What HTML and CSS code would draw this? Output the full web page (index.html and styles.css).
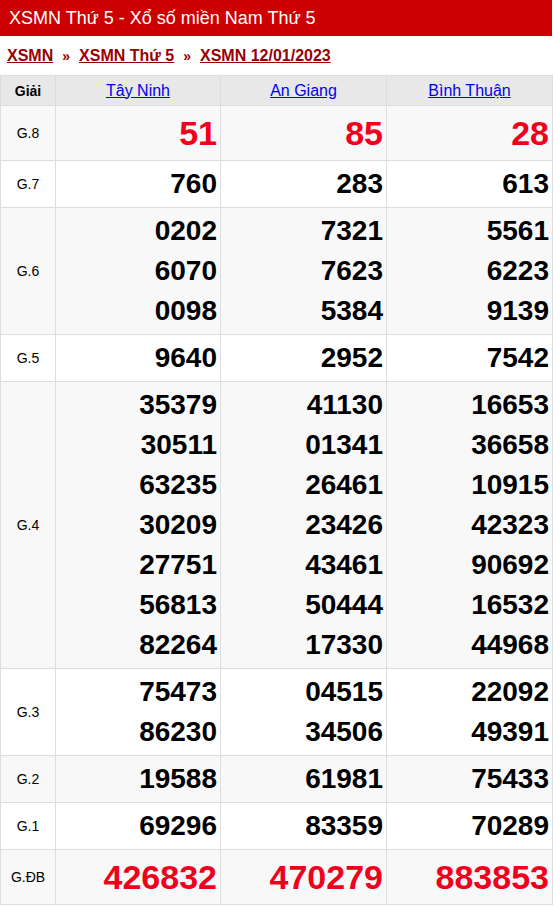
FILE: index.html
```html
<!DOCTYPE html>
<html lang="vi">
<head>
<meta charset="utf-8">
<title>XSMN Thứ 5</title>
<link rel="stylesheet" href="styles.css">
</head>
<body>
<div class="page">
  <h1 class="title">XSMN Thứ 5 - Xổ số miền Nam Thứ 5</h1>
  <div class="crumbs">
    <a href="#">XSMN</a><span class="sep">»</span><a href="#">XSMN Thứ 5</a><span class="sep">»</span><a href="#">XSMN 12/01/2023</a>
  </div>
  <table class="kq">
    <colgroup><col class="c0"><col class="c1"><col class="c2"><col class="c3"></colgroup>
    <thead>
      <tr><th class="lbl-h">Giải</th><th><a href="#">Tây Ninh</a></th><th><a href="#">An Giang</a></th><th><a href="#">Bình Thuận</a></th></tr>
    </thead>
    <tbody>
      <tr class="alt big"><td class="lbl">G.8</td><td><div>51</div></td><td><div>85</div></td><td><div>28</div></td></tr>
      <tr><td class="lbl">G.7</td><td><div>760</div></td><td><div>283</div></td><td><div>613</div></td></tr>
      <tr class="alt"><td class="lbl">G.6</td><td><div>0202</div><div>6070</div><div>0098</div></td><td><div>7321</div><div>7623</div><div>5384</div></td><td><div>5561</div><div>6223</div><div>9139</div></td></tr>
      <tr><td class="lbl">G.5</td><td><div>9640</div></td><td><div>2952</div></td><td><div>7542</div></td></tr>
      <tr class="alt"><td class="lbl">G.4</td>
        <td><div>35379</div><div>30511</div><div>63235</div><div>30209</div><div>27751</div><div>56813</div><div>82264</div></td>
        <td><div>41130</div><div>01341</div><div>26461</div><div>23426</div><div>43461</div><div>50444</div><div>17330</div></td>
        <td><div>16653</div><div>36658</div><div>10915</div><div>42323</div><div>90692</div><div>16532</div><div>44968</div></td></tr>
      <tr><td class="lbl">G.3</td><td><div>75473</div><div>86230</div></td><td><div>04515</div><div>34506</div></td><td><div>22092</div><div>49391</div></td></tr>
      <tr class="alt"><td class="lbl">G.2</td><td><div>19588</div></td><td><div>61981</div></td><td><div>75433</div></td></tr>
      <tr><td class="lbl">G.1</td><td><div>69296</div></td><td><div>83359</div></td><td><div>70289</div></td></tr>
      <tr class="alt big"><td class="lbl">G.ĐB</td><td><div>426832</div></td><td><div>470279</div></td><td><div>883853</div></td></tr>
    </tbody>
  </table>
</div>
</body>
</html>
```
FILE: styles.css
```css
* { box-sizing: border-box; }
html, body { margin: 0; padding: 0; background: #fff; }
body { font-family: "Liberation Sans", Arial, sans-serif; color: #000; }
.page { width: 552px; }
.title {
  margin: 0;
  height: 36px;
  line-height: 36px;
  padding: 0 9px;
  background: #cc0000;
  color: #fff;
  font-size: 18px;
  font-weight: normal;
}
.crumbs {
  padding: 10px 7px 9px;
  line-height: 19px;
  font-size: 16px;
  font-weight: bold;
  color: #990000;
}
.crumbs a { color: #990000; text-decoration: underline; }
.crumbs .sep { margin: 0 9px; font-size: 14px; }
.kq {
  width: 552px;
  border-collapse: collapse;
  table-layout: fixed;
  border: 1px solid #dddddd;
}
.c0 { width: 55px; }
.c1 { width: 165px; }
.c2 { width: 166px; }
.c3 { width: 166px; }
.kq th {
  background: #e8e8e8;
  border: 1px solid #dddddd;
  height: 30px;
  padding: 0;
  font-size: 16px;
  font-weight: normal;
  text-align: center;
}
.kq th.lbl-h { font-size: 14px; font-weight: bold; }
.kq th a { color: #0000ee; text-decoration: underline; }
.kq td {
  border: 1px solid #dddddd;
  padding: 3px 3px 3px 0;
  text-align: right;
  vertical-align: middle;
  font-size: 28px;
  font-weight: bold;
  line-height: 40px;
}
.kq td.lbl {
  text-align: center;
  padding: 0;
  font-size: 14px;
  font-weight: normal;
  line-height: 18px;
}
.kq tr.alt td { background: #f8f8f8; }
.kq tr.big td { font-size: 34px; line-height: 48px; color: #f0001c; }
.kq tr.big td.lbl { font-size: 14px; line-height: 18px; color: #000; }
```
